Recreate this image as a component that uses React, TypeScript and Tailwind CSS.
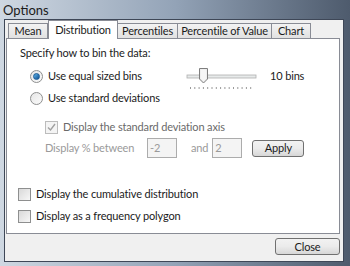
import React from "react";

const Radio = ({ checked, disabled }: { checked?: boolean; disabled?: boolean }) => (
  <span
    className={`w-[13px] h-[13px] rounded-full border flex items-center justify-center shrink-0 ${
      disabled ? "border-[#bcbcbc] bg-[#f4f4f4]" : "border-[#8e8f8f] bg-gradient-to-br from-[#e6e6e6] to-[#fbfbfb]"
    }`}
  >
    {checked && (
      <span className="w-[7px] h-[7px] rounded-full bg-gradient-to-br from-[#5fb6ec] to-[#0f4f8f] border border-[#1a5b96]" />
    )}
  </span>
);

const Check = ({ checked, disabled }: { checked?: boolean; disabled?: boolean }) => (
  <span
    className={`w-[13px] h-[13px] border flex items-center justify-center shrink-0 ${
      disabled ? "border-[#bcbcbc] bg-[#f4f4f4]" : "border-[#8e8f8f] bg-gradient-to-br from-[#d9d9d9] to-[#f7f7f7]"
    }`}
  >
    {checked && (
      <svg width="9" height="9" viewBox="0 0 9 9">
        <path d="M1 4.5 L3.5 7 L8 1" fill="none" stroke="#a0a0a0" strokeWidth="1.4" />
      </svg>
    )}
  </span>
);

const Tab = ({ label, w, active }: { label: string; w: string; active?: boolean }) =>
  active ? (
    <div
      className={`${w} h-[19px] -mb-[1px] relative z-10 bg-white border border-b-0 border-[#898c95] flex items-center justify-center whitespace-nowrap`}
    >
      {label}
    </div>
  ) : (
    <div
      className={`${w} h-[15px] -ml-[1px] bg-gradient-to-b from-[#f3f3f3] to-[#e1e1e1] border border-b-0 border-[#898c95] flex items-center justify-center whitespace-nowrap`}
    >
      {label}
    </div>
  );

const Slider = () => (
  <svg width="70" height="16" viewBox="0 0 70 16" className="overflow-visible">
    <rect x="0" y="7" width="69" height="3" fill="#e7eaea" stroke="#b0b0b0" strokeWidth="0.8" />
    <path d="M12.5 0.5 H20.5 V11 L16.5 15 L12.5 11 Z" fill="#e8e8e8" stroke="#7f7f7f" />
    <path d="M13.5 1.5 H19.5 V10.5 L16.5 13.5 L13.5 10.5 Z" fill="#f6f6f6" />
    {Array.from({ length: 15 }).map((_, i) => (
      <line key={i} x1={3.5 + i * 4.3} y1="19" x2={3.5 + i * 4.3} y2="21" stroke="#9a9a9a" strokeWidth="1" />
    ))}
  </svg>
);

const Button = ({ label, w }: { label: string; w: string }) => (
  <div
    className={`${w} h-[17px] rounded-[3px] border border-[#707070] bg-gradient-to-b from-[#f2f2f2] via-[#ebebeb] to-[#d7d7d7] flex items-center justify-center text-[#1b1b1b]`}
  >
    {label}
  </div>
);

export default function App() {
  return (
    <div className="w-[350px] h-[266px] flex flex-col bg-gradient-to-r from-[#cfd8e2] via-[#93a3b7] to-[#4e5b6d] text-[11px] tracking-[-0.15px] text-[#1b1b1b] font-['Lato',sans-serif] leading-[16px] overflow-hidden">
      <div className="h-[19px] pl-[3px] flex items-center text-[13px] tracking-normal text-[#1b1b1b]">Options</div>
      <div className="ml-[4px] mr-[6px] mb-[4px] flex-1 bg-[#f0f0f0] border border-[#3e4757] flex flex-col">
        <div className="flex items-end pl-[4px] h-[18px]">
          <Tab label="Mean" w="w-[40px]" />
          <Tab label="Distribution" w="w-[70px]" active />
          <Tab label="Percentiles" w="w-[61px]" />
          <Tab label="Percentile of Value" w="w-[95px]" />
          <Tab label="Chart" w="w-[40px]" />
        </div>
        <div className="ml-[1px] w-[334px] h-[196px] bg-white border border-[#898c95] pl-[13px] pt-[6px] flex flex-col">
          <div>Specify how to bin the data:</div>
          <div className="flex items-center h-[16px] mt-[7px]">
            <div className="w-[167px] pl-[10px] flex items-center gap-[5px]">
              <Radio checked />
              <span>Use equal sized bins</span>
            </div>
            <Slider />
            <span className="ml-[13px]">10 bins</span>
          </div>
          <div className="flex items-center h-[16px] mt-[6px] pl-[10px] gap-[5px]">
            <Radio />
            <span>Use standard deviations</span>
          </div>
          <div className="flex items-center h-[16px] mt-[13px] pl-[25px] gap-[5px] text-[#6a6a6a]">
            <Check checked disabled />
            <span>Display the standard deviation axis</span>
          </div>
          <div className="flex items-center h-[20px] mt-[3px] pl-[25px] text-[#9a9a9a]">
            <span className="w-[102px]">Display % between</span>
            <div className="w-[30px] h-[20px] border border-[#acacac] bg-[#f4f4f4] pl-[2px] flex items-center">-2</div>
            <span className="ml-[14px]">and</span>
            <div className="ml-[4px] w-[30px] h-[20px] border border-[#acacac] bg-[#f4f4f4] pl-[2px] flex items-center">2</div>
            <div className="ml-[10px]">
              <Button label="Apply" w="w-[52px]" />
            </div>
          </div>
          <div className="flex items-center h-[16px] mt-[28px] -ml-[2px] gap-[5px]">
            <Check />
            <span>Display the cumulative distribution</span>
          </div>
          <div className="flex items-center h-[16px] mt-[6px] -ml-[2px] gap-[5px]">
            <Check />
            <span>Display as a frequency polygon</span>
          </div>
        </div>
        <div className="flex justify-end pr-[3px] pt-[4px]">
          <Button label="Close" w="w-[65px]" />
        </div>
      </div>
    </div>
  );
}
